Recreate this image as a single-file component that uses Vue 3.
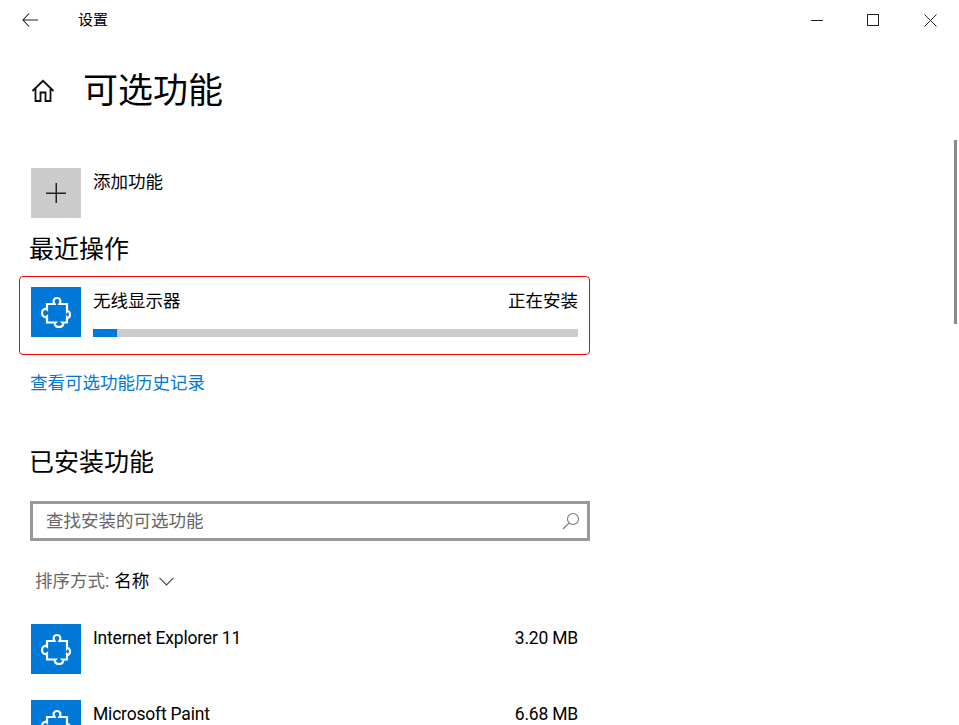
<script setup>
const apps = [
  { name: 'Internet Explorer 11', size: '3.20 MB' },
  { name: 'Microsoft Paint', size: '6.68 MB' },
]
const puzzle = 'M16 17H23.500C21.500 13.500 23 11 26 11C29 11 30.500 13.500 28.500 17H36V24.500C37 23.500 39 24.500 39 27.500C39 30.500 37 31.500 36 30.500V35.500H31.500C33 37 32 40 28 40C24 40 23 37 24.500 35.500H16V29.500C14 31 11 29.500 11 26C11 22.500 14 21 16 22.500Z'
</script>

<template>
  <div class="page">
    <header class="titlebar">
      <div class="title-left">
        <svg class="back" width="16" height="14" viewBox="0 0 16 14"><path d="M7 .5 1 7l6 6.500M1 7h15" fill="none" stroke="#222" stroke-width="1.100" /></svg>
        <span class="app-name">设置</span>
      </div>
      <div class="controls">
        <span class="ctl"><svg width="12" height="12" viewBox="0 0 12 12"><path d="M0 6.500h12" stroke="#222" /></svg></span>
        <span class="ctl"><svg width="13" height="13" viewBox="0 0 13 13"><rect x=".5" y=".5" width="11" height="11" fill="none" stroke="#222" /></svg></span>
        <span class="ctl"><svg width="13" height="13" viewBox="0 0 13 13"><path d="M.5.500l12 12M12.500.5l-12 12" stroke="#222" fill="none" /></svg></span>
      </div>
    </header>

    <main class="content">
      <div class="page-head">
        <svg width="24" height="24" viewBox="0 0 24 24"><path d="M1.500 12 12 1.800 22.500 12M4.500 9.500V22H9.500V13.500H14.500V22H19.500V9.500" fill="none" stroke="#111" stroke-width="1.800" /></svg>
        <h1>可选功能</h1>
      </div>

      <div class="row add-row">
        <div class="tile tile-grey">
          <svg width="20" height="20" viewBox="0 0 20 20"><path d="M10.250 0v20M0 10.250h20" stroke="#222" stroke-width="1.500" /></svg>
        </div>
        <span class="label">添加功能</span>
      </div>

      <h2 class="recent">最近操作</h2>

      <section class="card">
        <div class="tile tile-blue">
          <svg width="50" height="50" viewBox="0 0 50 50"><path :d="puzzle" fill="none" stroke="#fff" stroke-width="2.200" /></svg>
        </div>
        <div class="card-body">
          <div class="card-text"><span>无线显示器</span><span>正在安装</span></div>
          <div class="bar"><div class="bar-fill"></div></div>
        </div>
      </section>

      <a class="link">查看可选功能历史记录</a>

      <h2 class="installed">已安装功能</h2>

      <div class="search">
        <span class="placeholder">查找安装的可选功能</span>
        <svg width="18" height="18" viewBox="0 0 18 18"><circle cx="11" cy="7" r="5.500" fill="none" stroke="#777" stroke-width="1.100" /><path d="M7 11 1 17" stroke="#777" stroke-width="1.100" /></svg>
      </div>

      <div class="sort">
        <span class="sort-key">排序方式:</span>
        <span class="sort-value">名称</span>
        <svg width="15" height="9" viewBox="0 0 15 9"><path d="M.5.800 7.500 8 14.500.8" fill="none" stroke="#444" stroke-width="1.100" /></svg>
      </div>

      <div class="list">
        <div v-for="app in apps" :key="app.name" class="row app-row">
          <div class="tile tile-blue">
            <svg width="50" height="50" viewBox="0 0 50 50"><path :d="puzzle" fill="none" stroke="#fff" stroke-width="2.200" /></svg>
          </div>
          <span class="label grow">{{ app.name }}</span>
          <span class="label size">{{ app.size }}</span>
        </div>
      </div>
    </main>

    <div class="scrollbar"></div>
  </div>
</template>

<style scoped>
.page {
  position: relative;
  width: 959px;
  height: 725px;
  overflow: hidden;
  background: #fff;
  color: #000;
  font-family: Roboto, "Noto Sans CJK SC", sans-serif;
  font-size: 17.5px;
  line-height: 28px;
}
.titlebar {
  display: flex;
  justify-content: space-between;
  align-items: center;
  height: 40px;
}
.title-left {
  display: flex;
  align-items: center;
}
.back {
  margin-left: 22px;
}
.app-name {
  margin-left: 40px;
  font-size: 15px;
}
.controls {
  display: flex;
}
.ctl {
  display: flex;
  align-items: center;
  justify-content: center;
  width: 57px;
  height: 40px;
}
.content {
  display: flex;
  flex-direction: column;
  width: 560px;
  margin-left: 30px;
}
.page-head {
  display: flex;
  align-items: center;
  height: 50px;
  margin-top: 26px;
  padding-left: 1px;
}
h1 {
  margin: 2px 0 0 28px;
  font-size: 35px;
  font-weight: 400;
  line-height: 50px;
}
h2 {
  margin: 0 0 0 -1px;
  padding-top: 2px;
  font-size: 25px;
  font-weight: 400;
  line-height: 32px;
}
.row {
  display: flex;
  gap: 12px;
  padding-left: 1px;
}
.add-row {
  margin-top: 52px;
}
.tile {
  display: flex;
  align-items: center;
  justify-content: center;
  flex: none;
  width: 50px;
  height: 50px;
}
.tile-grey {
  background: #ccc;
}
.tile-blue {
  background: #0078d7;
}
.recent {
  margin-top: 14px;
}
.card {
  display: flex;
  gap: 12px;
  width: 571px;
  box-sizing: border-box;
  height: 79px;
  margin: 10px 0 0 -11px;
  padding: 10px 11px 0;
  border: 1px solid #f00;
  border-radius: 4px;
}
.card-body {
  flex: 1;
  display: flex;
  flex-direction: column;
  justify-content: space-between;
  height: 50px;
}
.card-text {
  display: flex;
  justify-content: space-between;
}
.bar {
  height: 8px;
  background: #ccc;
}
.bar-fill {
  width: 24px;
  height: 100%;
  background: #0078d7;
}
.link {
  margin-top: 14px;
  color: #0078d7;
}
.installed {
  margin-top: 48px;
}
.search {
  display: flex;
  align-items: center;
  justify-content: space-between;
  box-sizing: border-box;
  height: 40px;
  margin-top: 22px;
  padding: 0 7px 0 13px;
  border: 3px solid #999;
}
.placeholder {
  color: #666;
}
.sort {
  display: flex;
  align-items: center;
  height: 28px;
  margin-top: 26px;
  padding-left: 5px;
}
.sort-key {
  color: #666;
}
.sort-value {
  margin-left: 5px;
}
.sort svg {
  margin-left: 10px;
}
.list {
  display: flex;
  flex-direction: column;
  gap: 26px;
  margin-top: 29px;
}
.app-row {
  padding-right: 12px;
  letter-spacing: -0.2px;
}
.grow {
  flex: 1;
}
.scrollbar {
  position: absolute;
  left: 954px;
  top: 140px;
  width: 3px;
  height: 184px;
  background: #8a8a8a;
}
</style>
